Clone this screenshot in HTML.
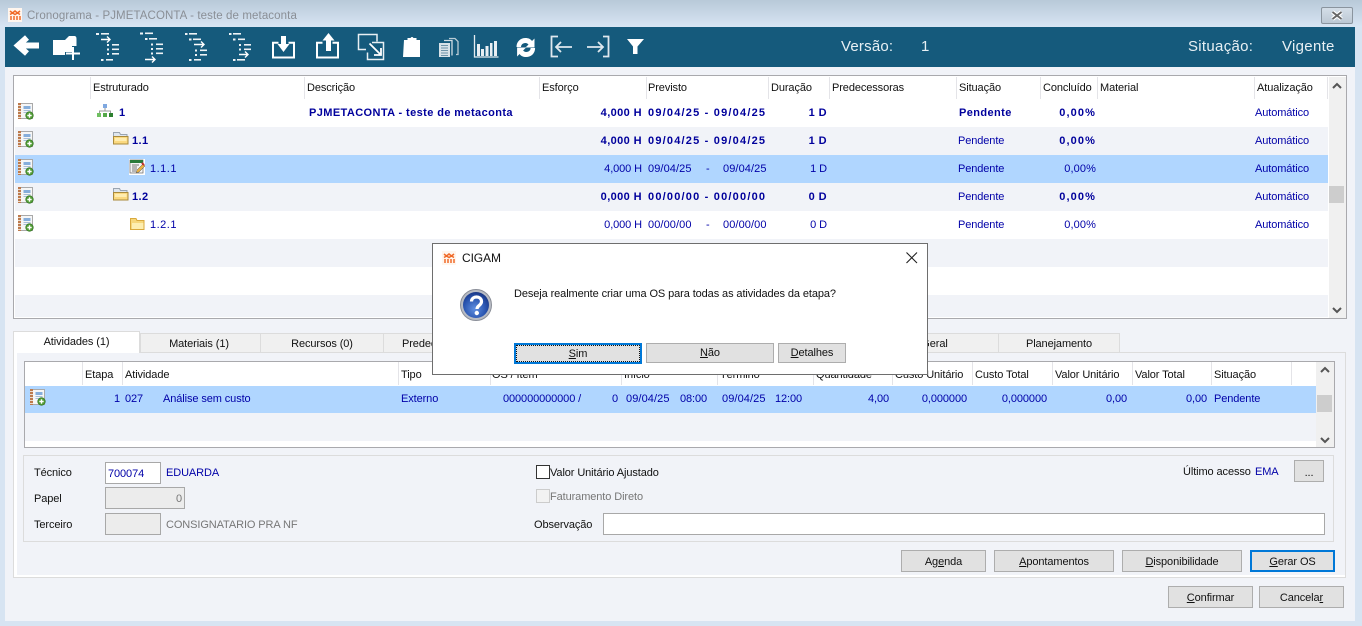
<!DOCTYPE html>
<html><head><meta charset="utf-8"><style>
html,body{margin:0;padding:0;width:1362px;height:626px;overflow:hidden;background:#d7e4f2}
*{box-sizing:border-box}
body{font:11px "Liberation Sans",sans-serif;color:#111;position:relative;letter-spacing:-.1px}
.a,.t,svg{position:absolute}
.t{white-space:nowrap;line-height:14px;height:14px;margin-top:1px}
.r{text-align:right}
.bl{color:#0000a8}
.b{font-weight:bold;letter-spacing:.4px;color:#00009c}
.d{letter-spacing:1.2px}
.p{letter-spacing:1.1px}
.n{letter-spacing:.1px}
.btn{position:absolute;background:#e1e1e1;border:1px solid #adadad;text-align:center;line-height:23px;color:#111;white-space:nowrap}
.f{border:2px solid #0078d7;line-height:21px}
.sep{position:absolute;width:1px;background:#e4e4e8}
.tab{position:absolute;top:333px;height:19px;background:#f0f0f0;border:1px solid #dcdcdc;border-bottom:0;text-align:center;line-height:20px}
.ip{position:absolute;border:1px solid #a8a8a8;background:#fff}
.dis{background:#ececec}
.tv{font-size:15px;height:17px;line-height:17px;color:#e8f0f4;margin-top:0}
u{text-decoration:underline}
</style></head><body>
<svg width="0" height="0" style="position:absolute"><defs>
<g id="nb">
<rect x="2.500" y="0.500" width="12" height="15" fill="#f6f6f6" stroke="#a9a9a9"/>
<rect x="0" y="0" width="3" height="16" fill="#bd7a4c"/>
<rect x="0" y="2" width="3" height="1" fill="#eadccf"/><rect x="0" y="5" width="3" height="1" fill="#eadccf"/><rect x="0" y="8" width="3" height="1" fill="#eadccf"/><rect x="0" y="11" width="3" height="1" fill="#eadccf"/><rect x="0" y="14" width="3" height="1" fill="#eadccf"/>
<rect x="5.500" y="3" width="7" height="3" fill="#86aedb"/><rect x="5.500" y="7" width="7" height="1" fill="#a8bfd8"/><rect x="5.500" y="9" width="4" height="1" fill="#a8bfd8"/>
<circle cx="11.500" cy="12.500" r="3.800" fill="#4f9a33" stroke="#2f7020" stroke-width=".6"/>
<path d="M11.500 10.300v4.400M9.300 12.500h4.400" stroke="#fff" stroke-width="1.400"/></g>
<g id="fold">
<path d="M.5 3.500V1.500h6l1 2h6.500v3H.5z" fill="#dfe6ee" stroke="#9aa4b0"/>
<path d="M.5 5.500h14.500v7.500H.5z" fill="#fbd980" stroke="#a98a3c"/>
<rect x="2" y="7" width="11.500" height="3" fill="#ffedb0"/></g>
<g id="fold2">
<path d="M.5 1.500v11h13.500v-9h-7l-1-2z" fill="#f6d77b" stroke="#d9a93c"/>
<path d="M2 6h11.500v6H2z" fill="#fdeeb0"/></g>
<g id="logo"><rect width="14" height="14" fill="#fff6ee"/><path d="M2 3l2.500 2 2.500-2 2.500 2 2.500-2M2 6.500l2.500-1.500 2.500 1.500 2.500-1.500 2.500 1.500M3 8v4M6 8v4M9 8v4M12 8v4" stroke="#f06a28" stroke-width="1.500" fill="none"/></g>
</defs></svg>

<!-- title bar -->
<div class="a" style="left:0;top:0;width:1362px;height:27px;background:linear-gradient(#b8c9d8,#d8e5f3)"></div>
<svg style="left:8px;top:8px" width="14" height="14"><use href="#logo"/></svg>
<div class="t" style="left:27px;top:8px;font-size:11.500px;color:#8a8f96;letter-spacing:.1px">Cronograma - PJMETACONTA - teste de metaconta</div>
<div class="a" style="left:1321px;top:7px;width:32px;height:17px;background:linear-gradient(#d4dee8,#bcc8d4);border:1px solid #8a949e;border-radius:2px"></div>
<svg style="left:1321px;top:7px" width="32" height="17"><path d="M11.500 5l9 7M20.500 5l-9 7" stroke="#fff" stroke-width="4"/><path d="M11.500 5l9 7M20.500 5l-9 7" stroke="#666" stroke-width="1.800"/></svg>

<!-- main surface -->
<div class="a" style="left:5px;top:27px;width:1350px;height:594px;background:#f1f3f8"></div>
<div class="a" style="left:5px;top:27px;width:1350px;height:40px;background:#155a7c"></div>

<!-- toolbar icons -->
<svg style="left:0;top:0" width="660" height="67" fill="#fff">
<path d="M39 45.500H18M27 37.500l-9 8 9 8" fill="none" stroke="#fff" stroke-width="6"/>
<path d="M53 40h12l4-4h5c2 0 2.500 1 2.500 3v7H72v6h-7v3H53z"/>
<path d="M72 47h2v5.500h6v2h-6V60h-2v-5.500h-6v-2h6z"/>
<!-- tree 1 -->
<g fill="#eef3f6">
<rect x="96" y="33" width="3" height="2"/><rect x="101" y="33" width="8" height="1.600"/>
<rect x="107" y="44" width="2" height="2"/><rect x="112" y="44" width="7" height="1.600"/>
<rect x="107" y="48.500" width="2" height="2"/><rect x="112" y="48.500" width="7" height="1.600"/>
<rect x="107" y="53" width="2" height="2"/><rect x="112" y="53" width="7" height="1.600"/>
<rect x="101" y="59" width="2.500" height="2"/><rect x="106" y="59" width="7" height="1.600"/>
<!-- tree 2 -->
<rect x="140" y="32.500" width="3" height="2"/><rect x="145" y="32.500" width="8" height="1.600"/>
<rect x="145" y="38" width="2.500" height="2"/><rect x="149" y="38" width="8" height="1.600"/>
<rect x="151" y="43.500" width="2" height="2"/><rect x="156" y="43.500" width="7" height="1.600"/>
<rect x="151" y="48" width="2" height="2"/><rect x="156" y="48" width="7" height="1.600"/>
<rect x="151" y="52.500" width="2" height="2"/><rect x="156" y="52.500" width="7" height="1.600"/>
<!-- tree 3 -->
<rect x="185" y="33" width="2.500" height="2"/><rect x="189" y="33" width="8" height="1.600"/>
<rect x="189" y="38.500" width="2.500" height="2"/><rect x="193" y="38.500" width="8" height="1.600"/>
<rect x="195" y="49.500" width="2" height="2"/><rect x="200" y="49.500" width="7" height="1.600"/>
<rect x="195" y="54" width="2" height="2"/><rect x="200" y="54" width="7" height="1.600"/>
<rect x="189" y="59" width="2.500" height="2"/><rect x="194" y="59" width="7" height="1.600"/>
<!-- tree 4 -->
<rect x="229" y="33" width="2.500" height="2"/><rect x="233" y="33" width="8" height="1.600"/>
<rect x="233" y="38.500" width="2.500" height="2"/><rect x="238" y="38.500" width="7" height="1.600"/>
<rect x="239" y="44" width="2" height="2"/><rect x="244" y="44" width="7" height="1.600"/>
<rect x="239" y="48.500" width="2" height="2"/><rect x="244" y="48.500" width="7" height="1.600"/>
<rect x="233" y="59" width="2.500" height="2"/><rect x="237" y="59" width="8" height="1.600"/>
</g>
<g fill="none" stroke="#fff" stroke-width="1.400">
<path d="M101 39.500h9M107 36.500l3 3-3 3"/>
<path d="M145 59.500h10M152 56.500l3 3-3 3"/>
<path d="M194 44.500h10M201 41.500l3 3-3 3"/>
<path d="M239 54.500h9M245 51.500l3 3-3 3"/>
</g>
<path d="M278.500 42.800h-5.500v14.700h21V42.800h-5.500" fill="none" stroke="#fff" stroke-width="2"/>
<path d="M281 36h5v8h3.500l-6 8-6-8H281z"/>
<path d="M322.500 42.800h-5.500v14.700h21V42.800h-5.500" fill="none" stroke="#fff" stroke-width="2"/>
<path d="M326 51V40.500h-3.500l6-7.500 6 7.500H331V51z"/>
<path d="M366 49.500h-7.500V34.500H377v7" fill="none" stroke="#e8eff3" stroke-width="1.500"/>
<path d="M372 42.500h11.500v17H367.500v-7" fill="none" stroke="#e8eff3" stroke-width="1.500"/>
<path d="M369.500 43.500l11 11M374 55h7V48" fill="none" stroke="#fff" stroke-width="1.800"/>
<path d="M404 40h3.500v-2h3l1-1h1l1 1h3v2h3.500v17h-17z"/>
<path d="M449 38.500h6l3 3v13h-2" fill="none" stroke="#b9ccd6" stroke-width="1.300"/>
<path d="M444 40.500h8v15" fill="none" stroke="#d0dde4" stroke-width="1.300"/>
<rect x="439" y="43" width="11" height="14" fill="#d8e2e8"/>
<path d="M441 45.500h7M441 48h7M441 50.500h7M441 53h7M441 55.500h7" stroke="#6d93a8"/>
<path d="M474.500 35v22h24" fill="none" stroke="#e4ecf0" stroke-width="1.300"/>
<rect x="477" y="44" width="3" height="12" fill="#e8eff3"/><rect x="481" y="49" width="3" height="7" fill="#e8eff3"/><rect x="485.500" y="46" width="3" height="10" fill="#e8eff3"/><rect x="490" y="43" width="2.500" height="13" fill="#e8eff3"/><rect x="494" y="41" width="3" height="15" fill="#e8eff3"/>
<path d="M516.500 47c0-5.500 4-9 9-9 3 0 5 1 6.500 3l2.500-2.500v9h-9l3-3c-1-1-1.800-1.500-3-1.500-3 0-4.500 2-4.500 4z"/>
<path d="M516.500 47c0-5.500 4-9 9-9 3 0 5 1 6.500 3l2.500-2.500v9h-9l3-3c-1-1-1.800-1.500-3-1.500-3 0-4.500 2-4.500 4z" transform="rotate(180 525.800 47.500)"/>
<path d="M558 36.500h-6.500v20h6.500M556 47h16M561 42l-5 5 5 5" fill="none" stroke="#dfe8ee" stroke-width="1.800"/>
<path d="M603 36.500h5.500v20H603M587 47h16M598 42l5 5-5 5" fill="none" stroke="#dfe8ee" stroke-width="1.800"/>
<path d="M627 39h17l-6.500 7.500V54h-4.500v-7.500z"/>
</svg>
<div class="t tv" style="left:841px;top:38px;letter-spacing:.2px">Versão:</div>
<div class="t tv" style="left:921px;top:38px">1</div>
<div class="t tv" style="left:1188px;top:38px;letter-spacing:.3px">Situação:</div>
<div class="t tv" style="left:1282px;top:38px;letter-spacing:.3px">Vigente</div>

<!-- main grid -->
<div class="a" style="left:13px;top:75px;width:1334px;height:244px;background:#fff;border:1px solid #a9a9ad"></div>
<div class="a" style="left:15px;top:127px;width:1313px;height:28px;background:#f1f3f8"></div>
<div class="a" style="left:15px;top:155px;width:1313px;height:28px;background:#b0d6ff"></div>
<div class="a" style="left:15px;top:183px;width:1313px;height:28px;background:#f1f3f8"></div>
<div class="a" style="left:15px;top:239px;width:1313px;height:28px;background:#f1f3f8"></div>
<div class="a" style="left:15px;top:295px;width:1313px;height:22px;background:#f1f3f8"></div>
<div class="sep" style="left:90px;top:77px;height:22px"></div><div class="sep" style="left:304px;top:77px;height:22px"></div><div class="sep" style="left:539px;top:77px;height:22px"></div><div class="sep" style="left:646px;top:77px;height:22px"></div><div class="sep" style="left:768px;top:77px;height:22px"></div><div class="sep" style="left:829px;top:77px;height:22px"></div><div class="sep" style="left:956px;top:77px;height:22px"></div><div class="sep" style="left:1040px;top:77px;height:22px"></div><div class="sep" style="left:1097px;top:77px;height:22px"></div><div class="sep" style="left:1254px;top:77px;height:22px"></div><div class="sep" style="left:1327px;top:77px;height:22px"></div>
<div class="t" style="left:93px;top:80px">Estruturado</div><div class="t" style="left:307px;top:80px">Descrição</div><div class="t" style="left:542px;top:80px">Esforço</div><div class="t" style="left:648px;top:80px">Previsto</div><div class="t" style="left:771px;top:80px">Duração</div><div class="t" style="left:832px;top:80px">Predecessoras</div><div class="t" style="left:959px;top:80px">Situação</div><div class="t" style="left:1043px;top:80px">Concluído</div><div class="t" style="left:1100px;top:80px">Material</div><div class="t" style="left:1257px;top:80px">Atualização</div>

<!-- scrollbar -->
<div class="a" style="left:1329px;top:77px;width:17px;height:241px;background:#f0f0f0"></div>
<div class="a" style="left:1329px;top:186px;width:15px;height:17px;background:#cdcdcd"></div>
<svg style="left:1329px;top:80px" width="17" height="12"><path d="M4 8l4-4 4 4" fill="none" stroke="#555" stroke-width="2"/></svg>
<svg style="left:1329px;top:304px" width="17" height="12"><path d="M4 4l4 4 4-4" fill="none" stroke="#555" stroke-width="2"/></svg>

<!-- row icons -->
<svg style="left:18px;top:103px" width="17" height="17"><use href="#nb"/></svg>
<svg style="left:18px;top:131px" width="17" height="17"><use href="#nb"/></svg>
<svg style="left:18px;top:159px" width="17" height="17"><use href="#nb"/></svg>
<svg style="left:18px;top:187px" width="17" height="17"><use href="#nb"/></svg>
<svg style="left:18px;top:215px" width="17" height="17"><use href="#nb"/></svg>
<svg style="left:97px;top:104px" width="17" height="15"><rect x="6" y="0" width="4" height="4" fill="#7fa8e0"/><path d="M8 4v3M2.500 9V7h11v2" stroke="#999" fill="none"/><rect x="0" y="9" width="4" height="4" fill="#6fc060"/><rect x="6" y="9" width="4" height="4" fill="#55a848"/><rect x="12" y="9" width="4" height="4" fill="#2d8030"/></svg>
<svg style="left:113px;top:131px" width="16" height="15"><use href="#fold"/></svg>
<svg style="left:113px;top:187px" width="16" height="15"><use href="#fold"/></svg>
<svg style="left:129px;top:159px" width="16" height="17"><rect width="16" height="16" fill="#fff"/><rect x="1" y="1" width="13" height="13" fill="#f4f4f4" stroke="#666" stroke-width=".7"/><rect x="1" y="1" width="13" height="3" fill="#2a7a3a"/><path d="M3 6h7M3 8h5M3 10h5M3 12h4" stroke="#777"/><path d="M7 14l1-3 6-6 2 2-6 6z" fill="#e8b040" stroke="#555" stroke-width=".5"/><rect x="12.500" y="4" width="3" height="2" fill="#c03030" transform="rotate(45 14 5)"/></svg>
<svg style="left:130px;top:217px" width="15" height="14"><use href="#fold2"/></svg>

<!-- rows -->
<div class="t b" style="left:119px;top:105px">1</div>
<div class="t b" style="left:309px;top:105px">PJMETACONTA - teste de metaconta</div>
<div class="t b r" style="left:560px;width:82px;top:105px">4,000 H</div>
<div class="t b d" style="left:648px;top:105px">09/04/25 - 09/04/25</div>
<div class="t b r" style="left:790px;width:37px;top:105px">1 D</div>
<div class="t b" style="left:959px;top:105px">Pendente</div>
<div class="t b r p" style="left:1040px;width:56px;top:105px">0,00%</div>
<div class="t bl" style="left:1255px;top:105px">Automático</div>

<div class="t b" style="left:132px;top:133px">1.1</div>
<div class="t b r" style="left:560px;width:82px;top:133px">4,000 H</div>
<div class="t b d" style="left:648px;top:133px">09/04/25 - 09/04/25</div>
<div class="t b r" style="left:790px;width:37px;top:133px">1 D</div>
<div class="t bl" style="left:958px;top:133px">Pendente</div>
<div class="t b r p" style="left:1040px;width:56px;top:133px">0,00%</div>
<div class="t bl" style="left:1255px;top:133px">Automático</div>

<div class="t bl" style="left:150px;top:161px;letter-spacing:.5px">1.1.1</div>
<div class="t bl r" style="left:560px;width:82px;top:161px">4,000 H</div>
<div class="t bl n" style="left:648px;top:161px">09/04/25</div><div class="t bl" style="left:706px;top:161px">-</div><div class="t bl n" style="left:723px;top:161px">09/04/25</div>
<div class="t bl r" style="left:790px;width:37px;top:161px">1 D</div>
<div class="t bl" style="left:958px;top:161px">Pendente</div>
<div class="t bl r n" style="left:1040px;width:56px;top:161px">0,00%</div>
<div class="t bl" style="left:1255px;top:161px">Automático</div>

<div class="t b" style="left:132px;top:189px">1.2</div>
<div class="t b r" style="left:560px;width:82px;top:189px">0,000 H</div>
<div class="t b d" style="left:648px;top:189px">00/00/00 - 00/00/00</div>
<div class="t b r" style="left:790px;width:37px;top:189px">0 D</div>
<div class="t bl" style="left:958px;top:189px">Pendente</div>
<div class="t b r p" style="left:1040px;width:56px;top:189px">0,00%</div>
<div class="t bl" style="left:1255px;top:189px">Automático</div>

<div class="t bl" style="left:150px;top:217px;letter-spacing:.5px">1.2.1</div>
<div class="t bl r" style="left:560px;width:82px;top:217px">0,000 H</div>
<div class="t bl n" style="left:648px;top:217px">00/00/00</div><div class="t bl" style="left:706px;top:217px">-</div><div class="t bl n" style="left:723px;top:217px">00/00/00</div>
<div class="t bl r" style="left:790px;width:37px;top:217px">0 D</div>
<div class="t bl" style="left:958px;top:217px">Pendente</div>
<div class="t bl r n" style="left:1040px;width:56px;top:217px">0,00%</div>
<div class="t bl" style="left:1255px;top:217px">Automático</div>

<!-- tab panel -->
<div class="a" style="left:13px;top:352px;width:1333px;height:226px;background:#fff;border:1px solid #dcdcdc"></div>
<div class="a" style="left:17px;top:353px;width:1328px;height:222px;background:#f1f3f8"></div>
<div class="tab" style="left:140px;width:121px;padding-right:3px">Materiais (1)</div>
<div class="tab" style="left:260px;width:124px">Recursos (0)</div>
<div class="tab" style="left:383px;width:120px;text-align:left;padding-left:18px">Predecessoras</div>
<div class="tab" style="left:870px;width:129px">Geral</div>
<div class="tab" style="left:998px;width:122px">Planejamento</div>
<div class="a" style="left:13px;top:331px;width:127px;height:22px;background:#fff;border:1px solid #dcdcdc;border-bottom:0;text-align:center;line-height:20px">Atividades (1)</div>

<!-- sub grid -->
<div class="a" style="left:24px;top:361px;width:1311px;height:87px;background:#fff;border:1px solid #a9a9ad"></div>
<div class="a" style="left:25px;top:386px;width:1291px;height:27px;background:#b0d6ff"></div>
<div class="a" style="left:25px;top:413px;width:1291px;height:28px;background:#f1f3f8"></div>
<div class="sep" style="left:82px;top:362px;height:23px"></div><div class="sep" style="left:122px;top:362px;height:23px"></div><div class="sep" style="left:398px;top:362px;height:23px"></div><div class="sep" style="left:490px;top:362px;height:23px"></div><div class="sep" style="left:621px;top:362px;height:23px"></div><div class="sep" style="left:717px;top:362px;height:23px"></div><div class="sep" style="left:813px;top:362px;height:23px"></div><div class="sep" style="left:892px;top:362px;height:23px"></div><div class="sep" style="left:972px;top:362px;height:23px"></div><div class="sep" style="left:1052px;top:362px;height:23px"></div><div class="sep" style="left:1132px;top:362px;height:23px"></div><div class="sep" style="left:1211px;top:362px;height:23px"></div><div class="sep" style="left:1291px;top:362px;height:23px"></div>
<div class="t" style="left:85px;top:367px">Etapa</div><div class="t" style="left:125px;top:367px">Atividade</div><div class="t" style="left:401px;top:367px">Tipo</div><div class="t" style="left:492px;top:367px">OS / Item</div><div class="t" style="left:624px;top:367px">Início</div><div class="t" style="left:720px;top:367px">Término</div><div class="t" style="left:816px;top:367px">Quantidade</div><div class="t" style="left:895px;top:367px">Custo Unitário</div><div class="t" style="left:975px;top:367px">Custo Total</div><div class="t" style="left:1055px;top:367px">Valor Unitário</div><div class="t" style="left:1135px;top:367px">Valor Total</div><div class="t" style="left:1214px;top:367px">Situação</div>
<div class="a" style="left:1316px;top:362px;width:18px;height:85px;background:#f0f0f0"></div>
<div class="a" style="left:1317px;top:395px;width:15px;height:17px;background:#cdcdcd"></div>
<svg style="left:1317px;top:364px" width="17" height="12"><path d="M4 8l4-4 4 4" fill="none" stroke="#555" stroke-width="2"/></svg>
<svg style="left:1317px;top:434px" width="17" height="12"><path d="M4 4l4 4 4-4" fill="none" stroke="#555" stroke-width="2"/></svg>
<svg style="left:30px;top:389px" width="17" height="17"><use href="#nb"/></svg>
<div class="t bl r" style="left:90px;width:30px;top:391px">1</div>
<div class="t bl" style="left:125px;top:391px">027</div>
<div class="t bl" style="left:163px;top:391px">Análise sem custo</div>
<div class="t bl" style="left:401px;top:391px">Externo</div>
<div class="t bl" style="left:503px;top:391px">000000000000 /</div>
<div class="t bl r" style="left:590px;width:28px;top:391px">0</div>
<div class="t bl n" style="left:626px;top:391px">09/04/25</div><div class="t bl" style="left:680px;top:391px">08:00</div>
<div class="t bl n" style="left:722px;top:391px">09/04/25</div><div class="t bl" style="left:775px;top:391px">12:00</div>
<div class="t bl r" style="left:830px;width:59px;top:391px">4,00</div>
<div class="t bl r" style="left:900px;width:67px;top:391px">0,000000</div>
<div class="t bl r" style="left:980px;width:67px;top:391px">0,000000</div>
<div class="t bl r" style="left:1060px;width:67px;top:391px">0,00</div>
<div class="t bl r" style="left:1140px;width:67px;top:391px">0,00</div>
<div class="t bl" style="left:1214px;top:391px">Pendente</div>

<!-- form -->
<div class="a" style="left:23px;top:455px;width:1311px;height:87px;border:1px solid #dcdcdc"></div>
<div class="t" style="left:34px;top:465px">Técnico</div>
<div class="ip" style="left:105px;top:462px;width:56px;height:22px"></div>
<div class="t bl" style="left:108px;top:466px">700074</div>
<div class="t bl" style="left:166px;top:465px">EDUARDA</div>
<div class="t" style="left:34px;top:491px">Papel</div>
<div class="ip dis" style="left:105px;top:487px;width:80px;height:22px"></div>
<div class="t r" style="left:150px;width:32px;top:491px;color:#777">0</div>
<div class="t" style="left:34px;top:517px">Terceiro</div>
<div class="ip dis" style="left:105px;top:513px;width:56px;height:22px"></div>
<div class="t" style="left:166px;top:517px;color:#777">CONSIGNATARIO PRA NF</div>
<div class="a" style="left:536px;top:465px;width:14px;height:14px;background:#fff;border:1px solid #333"></div>
<div class="t" style="left:550px;top:465px">Valor Unitário Ajustado</div>
<div class="a" style="left:536px;top:489px;width:14px;height:14px;background:#f2f2f2;border:1px solid #ccc"></div>
<div class="t" style="left:550px;top:489px;color:#777">Faturamento Direto</div>
<div class="t" style="left:534px;top:517px">Observação</div>
<div class="ip" style="left:603px;top:513px;width:722px;height:22px"></div>
<div class="t" style="left:1183px;top:464px">Último acesso</div>
<div class="t bl" style="left:1255px;top:464px">EMA</div>
<div class="btn" style="left:1294px;top:460px;width:30px;height:22px;line-height:24px">...</div>

<div class="btn" style="left:901px;top:550px;width:85px;height:22px"><span>Ag<u>e</u>nda</span></div>
<div class="btn" style="left:994px;top:550px;width:120px;height:22px"><u>A</u>pontamentos</div>
<div class="btn" style="left:1122px;top:550px;width:120px;height:22px"><u>D</u>isponibilidade</div>
<div class="btn f" style="left:1250px;top:550px;width:85px;height:22px"><u>G</u>erar OS</div>
<div class="btn" style="left:1168px;top:586px;width:85px;height:22px"><u>C</u>onfirmar</div>
<div class="btn" style="left:1259px;top:586px;width:85px;height:22px">Cancela<u>r</u></div>

<!-- dialog -->
<div class="a" style="left:432px;top:243px;width:496px;height:132px;background:#fff;border:1px solid #6e6e6e"></div>
<svg style="left:442px;top:251px" width="14" height="14"><use href="#logo"/></svg>
<div class="t" style="left:462px;top:250px;font-size:12px">CIGAM</div>
<svg style="left:906px;top:252px" width="12" height="12"><path d="M.5.5l10.500 10.500M11 .5L.5 11" stroke="#222" stroke-width="1.100"/></svg>
<svg style="left:460px;top:289px" width="33" height="33">
<defs><radialGradient id="q" cx=".45" cy=".65" r=".7"><stop offset="0" stop-color="#5f8fe0"/><stop offset=".6" stop-color="#2a55b0"/><stop offset="1" stop-color="#15307c"/></radialGradient></defs>
<circle cx="16" cy="16" r="15.500" fill="#b8bcc4" stroke="#8a8e98"/><circle cx="16" cy="16" r="13" fill="url(#q)"/>
<path d="M11.500 12.500c0-6 10-6 10 0 0 4-4.500 4-4.500 7.500" fill="none" stroke="#fff" stroke-width="3.200"/><circle cx="16.800" cy="24" r="2.200" fill="#fff"/></svg>
<div class="t" style="left:514px;top:286px">Deseja realmente criar uma OS para todas as atividades da etapa?</div>
<div class="btn f" style="left:514px;top:343px;width:128px;height:21px;line-height:17px"><div style="position:absolute;inset:0;border:1px dotted #111;line-height:17px"><u>S</u>im</div></div>
<div class="btn" style="left:646px;top:343px;width:128px;height:20px;line-height:18px"><u>N</u>ão</div>
<div class="btn" style="left:778px;top:343px;width:68px;height:20px;line-height:18px"><u>D</u>etalhes</div>
</body></html>
